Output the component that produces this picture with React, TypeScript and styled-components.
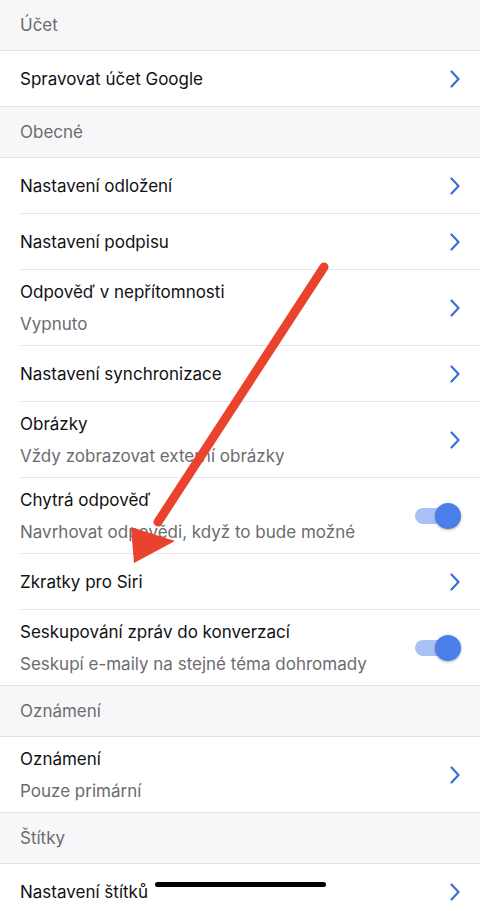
import React from "react";
import styled, { createGlobalStyle } from "styled-components";

const Global = createGlobalStyle`
  html, body {
    margin: 0;
    padding: 0;
    background: #ffffff;
  }
  body {
    font-family: Inter, "Noto Sans", "Liberation Sans", sans-serif;
    -webkit-font-smoothing: antialiased;
  }
  * {
    box-sizing: border-box;
  }
`;

type Item = {
  title: string;
  subtitle?: string;
  toggle?: boolean;
};

type Section = {
  header: string;
  items: Item[];
};

const sections: Section[] = [
  { header: "Účet", items: [{ title: "Spravovat účet Google" }] },
  {
    header: "Obecné",
    items: [
      { title: "Nastavení odložení" },
      { title: "Nastavení podpisu" },
      { title: "Odpověď v nepřítomnosti", subtitle: "Vypnuto" },
      { title: "Nastavení synchronizace" },
      { title: "Obrázky", subtitle: "Vždy zobrazovat externí obrázky" },
      {
        title: "Chytrá odpověď",
        subtitle: "Navrhovat odpovědi, když to bude možné",
        toggle: true,
      },
      { title: "Zkratky pro Siri" },
      {
        title: "Seskupování zpráv do konverzací",
        subtitle: "Seskupí e-maily na stejné téma dohromady",
        toggle: true,
      },
    ],
  },
  {
    header: "Oznámení",
    items: [{ title: "Oznámení", subtitle: "Pouze primární" }],
  },
  { header: "Štítky", items: [{ title: "Nastavení štítků" }] },
];

export default function App() {
  return (
    <Screen>
      <Global />
      {sections.map((s) => (
        <Group key={s.header}>
          <Header>{s.header}</Header>
          {s.items.map((it) => (
            <Row key={it.title} $tall={!!it.subtitle}>
              <Texts>
                <Title>{it.title}</Title>
                {it.subtitle && <Subtitle>{it.subtitle}</Subtitle>}
              </Texts>
              {it.toggle ? (
                <Toggle>
                  <Thumb />
                </Toggle>
              ) : (
                <Chevron viewBox="0 0 10 18">
                  <path
                    d="M1.5 1.5 L8.5 9 L1.5 16.5"
                    fill="none"
                    stroke="#3b6fd6"
                    strokeWidth="2.2"
                    strokeLinecap="round"
                    strokeLinejoin="round"
                  />
                </Chevron>
              )}
            </Row>
          ))}
        </Group>
      ))}
      <Arrow viewBox="0 0 480 911">
        <line
          x1="324"
          y1="267"
          x2="158"
          y2="522"
          stroke="#e9432d"
          strokeWidth="9"
          strokeLinecap="round"
        />
        <polygon points="134,563 131,527 175,541" fill="#e9432d" />
      </Arrow>
      <HomeBar />
    </Screen>
  );
}

const Screen = styled.div`
  position: relative;
  width: 480px;
  height: 911px;
  overflow: hidden;
  background: #ffffff;
`;

const Group = styled.section`
  display: flex;
  flex-direction: column;
`;

const Header = styled.div`
  height: 51px;
  display: flex;
  align-items: center;
  padding: 0 20px;
  background: #f7f7f9;
  color: #6c6c70;
  font-size: 17px;
  border-bottom: 1px solid #e2e2e6;
`;

const Row = styled.div<{ $tall: boolean }>`
  position: relative;
  height: ${(p) => (p.$tall ? 76 : 56)}px;
  display: flex;
  align-items: center;
  justify-content: space-between;
  padding: 0 20px 1px;
  background: #ffffff;
  &::after {
    content: "";
    position: absolute;
    bottom: 0;
    left: 20px;
    right: 0;
    height: 1px;
    background: #e6e6ea;
  }
  &:last-child::after {
    left: 0;
    background: #e2e2e6;
  }
`;

const Texts = styled.div`
  display: flex;
  flex-direction: column;
  gap: 10px;
`;

const Title = styled.div`
  font-size: 17px;
  color: #111113;
  line-height: 22px;
`;

const Subtitle = styled.div`
  font-size: 17px;
  color: #6c6c70;
  line-height: 22px;
`;

const Chevron = styled.svg`
  width: 10px;
  height: 18px;
  flex: none;
`;

const Toggle = styled.div`
  position: relative;
  width: 40px;
  height: 16px;
  margin-right: 5px;
  border-radius: 8px;
  background: #a9c1f4;
  flex: none;
`;

const Thumb = styled.div`
  position: absolute;
  top: -5px;
  right: -6px;
  width: 26px;
  height: 26px;
  border-radius: 50%;
  background: #4a7ee8;
  box-shadow: 0 1px 3px rgba(0, 0, 0, 0.3);
`;

const Arrow = styled.svg`
  position: absolute;
  left: 0;
  top: 0;
  width: 480px;
  height: 911px;
  pointer-events: none;
`;

const HomeBar = styled.div`
  position: absolute;
  left: 155px;
  bottom: 24px;
  width: 171px;
  height: 5px;
  border-radius: 3px;
  background: #000000;
`;
